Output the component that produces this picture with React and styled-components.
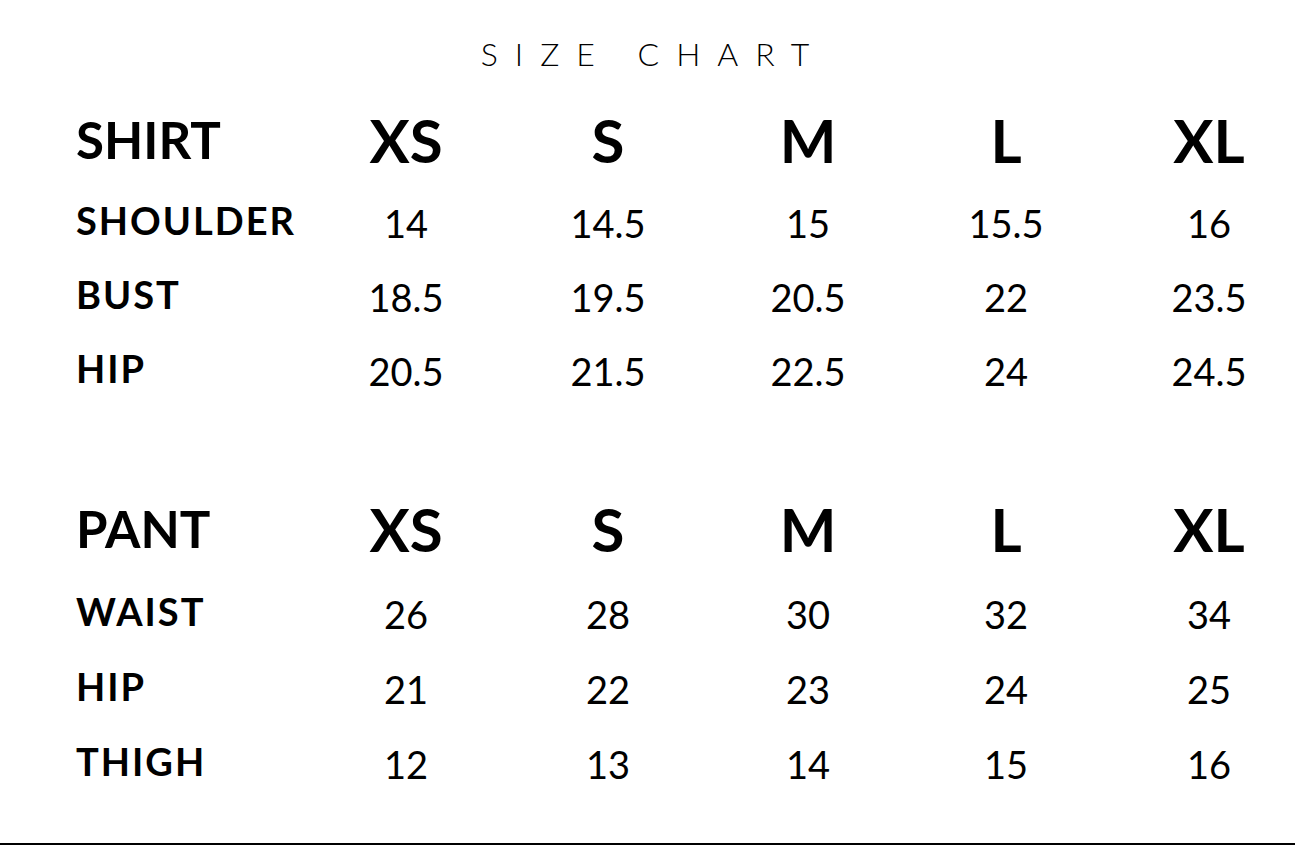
import React from "react";
import styled, { createGlobalStyle } from "styled-components";

const GlobalStyle = createGlobalStyle`
  html, body {
    margin: 0;
    padding: 0;
    background: #fff;
    overflow: hidden;
  }
`;

const Page = styled.div`
  display: flex;
  flex-direction: column;
  min-height: 100vh;
  box-sizing: border-box;
  padding-top: 34px;
  color: #000;
  font-family: Lato, "Liberation Sans", sans-serif;
`;

const Title = styled.h1`
  margin: 0;
  padding-left: 12px;
  text-align: center;
  font-size: 32px;
  line-height: 40px;
  font-weight: 300;
  letter-spacing: 17px;
`;

const Table = styled.div`
  display: grid;
  grid-template-columns: 230px 200px 204px 196px 200px 206px;
  padding-left: 76px;
  margin-top: ${(p) => p.$top}px;
`;

const Row = styled.div`
  display: contents;
`;

const Label = styled.div`
  height: ${(p) => p.$h}px;
  line-height: ${(p) => p.$h}px;
  font-size: ${(p) => (p.$head ? 51 : 38)}px;
  font-weight: 700;
  letter-spacing: ${(p) => (p.$head ? 0 : 2)}px;
  white-space: nowrap;
`;

const Cell = styled.div`
  height: ${(p) => p.$h}px;
  line-height: ${(p) => p.$h}px;
  text-align: center;
  white-space: nowrap;
  font-size: ${(p) => (p.$head ? 60 : 38)}px;
  font-weight: ${(p) => (p.$head ? 700 : 400)};
  padding-top: ${(p) => (p.$head ? 0 : 3)}px;
  box-sizing: border-box;
`;

const Rule = styled.div`
  margin-top: auto;
  height: 2px;
  background: #000;
`;

const sizes = ["XS", "S", "M", "L", "XL"];

const shirt = {
  name: "SHIRT",
  rows: [
    ["SHOULDER", "14", "14.5", "15", "15.5", "16"],
    ["BUST", "18.5", "19.5", "20.5", "22", "23.5"],
    ["HIP", "20.5", "21.5", "22.5", "24", "24.5"],
  ],
};

const pant = {
  name: "PANT",
  rows: [
    ["WAIST", "26", "28", "30", "32", "34"],
    ["HIP", "21", "22", "23", "24", "25"],
    ["THIGH", "12", "13", "14", "15", "16"],
  ],
};

function SizeTable({ data, top, headH, rowH }) {
  return (
    <Table $top={top}>
      <Row>
        <Label $head $h={headH}>{data.name}</Label>
        {sizes.map((s) => (
          <Cell key={s} $head $h={headH}>{s}</Cell>
        ))}
      </Row>
      {data.rows.map(([label, ...vals]) => (
        <Row key={label}>
          <Label $h={rowH}>{label}</Label>
          {vals.map((v, i) => (
            <Cell key={i} $h={rowH}>{v}</Cell>
          ))}
        </Row>
      ))}
    </Table>
  );
}

export default function App() {
  return (
    <>
      <GlobalStyle />
      <Page>
        <Title>SIZE CHART</Title>
        <SizeTable data={shirt} top={23} headH={86} rowH={74} />
        <SizeTable data={pant} top={79} headH={90} rowH={75} />
        <Rule />
      </Page>
    </>
  );
}
